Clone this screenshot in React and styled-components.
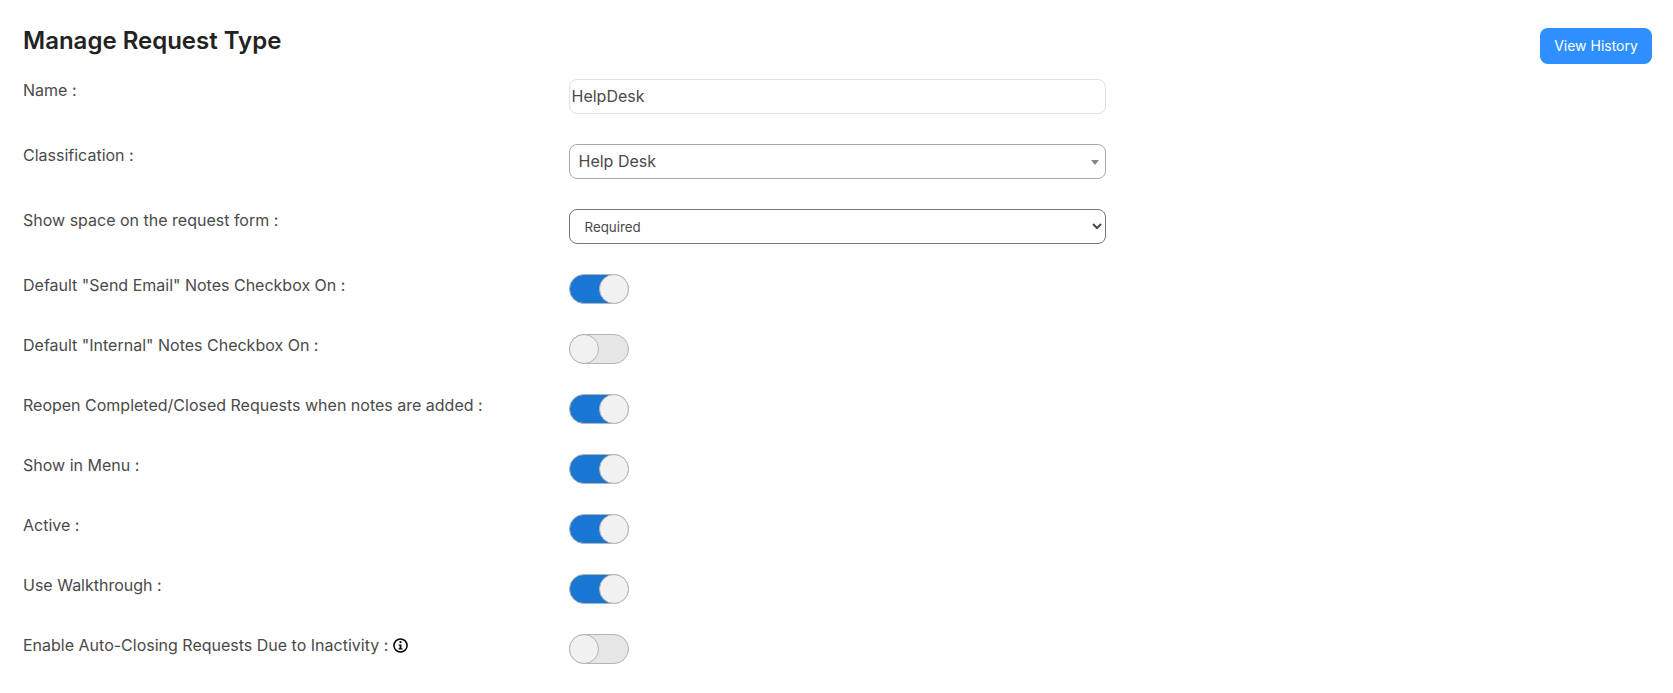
import React from 'react';
import styled, { createGlobalStyle } from 'styled-components';

const GlobalStyle = createGlobalStyle`
    html, body {
        margin: 0;
        background: #fff;
    }
    body {
        font-family: Inter, "Noto Sans", sans-serif;
        color: #495057;
    }
`;

const Page = styled.div`
    padding: 25px 21px 0 23px;
`;

const Header = styled.div`
    display: flex;
    justify-content: space-between;
    align-items: flex-start;
    height: 54px;
`;

const Title = styled.h2`
    margin: 0;
    font-size: 24px;
    line-height: 32px;
    font-weight: 600;
    color: #222;
`;

const HistoryButton = styled.button`
    width: 112px;
    height: 36px;
    margin-top: 3px;
    padding: 0 0 2px;
    border: none;
    border-radius: 8px;
    background: #2e8fff;
    color: #fff;
    font: 400 14px Inter, sans-serif;
`;

const Form = styled.div`
    display: flex;
    flex-direction: column;
`;

const Row = styled.div`
    display: grid;
    grid-template-columns: 546px 537px;
    height: ${(p) => (p.$tall ? '65px' : '60px')};
`;

const Label = styled.label`
    display: flex;
    align-items: center;
    gap: 5px;
    height: 22px;
    font-size: 16px;
    color: #4a4a4a;
`;

const TextInput = styled.input`
    box-sizing: border-box;
    width: 100%;
    height: 35px;
    padding: 0 1px 1px 1.5px;
    border: 1px solid #dee2e6;
    border-radius: 8px;
    outline: none;
    font: 400 16px Inter, sans-serif;
    color: #4a4a4a;
`;

const ComboBox = styled.div`
    box-sizing: border-box;
    display: flex;
    align-items: center;
    justify-content: space-between;
    height: 35px;
    padding: 0 6px 2px 8.5px;
    border: 1px solid #aaa;
    border-radius: 8px;
    font-size: 16px;
    color: #4a4a4a;
`;

const Caret = styled.span`
    width: 0;
    height: 0;
    border-left: 4px solid transparent;
    border-right: 4px solid transparent;
    border-top: 5px solid #888;
    margin-top: 3px;
`;

const NativeSelect = styled.select`
    box-sizing: border-box;
    width: 100%;
    height: 35px;
    padding: 0 10.5px;
    border: 1px solid #767676;
    border-radius: 8px;
    background-color: #fff;
    font: 400 13.33px Inter, sans-serif;
    color: #4a4a4a;
`;

const Track = styled.div`
    box-sizing: border-box;
    display: flex;
    justify-content: ${(p) => (p.$on ? 'flex-end' : 'flex-start')};
    width: 60px;
    height: 30px;
    border: 1px solid #b4b4b4;
    border-radius: 15px;
    background: ${(p) => (p.$on ? '#1976d2' : '#e6e6e6')};
`;

const Knob = styled.span`
    box-sizing: border-box;
    width: 30px;
    height: 30px;
    margin: -1px;
    border: 1px solid #b4b4b4;
    border-radius: 50%;
    background: #f1f1f1;
`;

const InfoIcon = () => (
    <svg width="15" height="15" viewBox="0 0 16 16" aria-hidden="true">
        <circle cx="8" cy="8" r="7" fill="#fff" stroke="#000" strokeWidth="1.6" />
        <rect x="7" y="3.4" width="2" height="2" fill="#000" />
        <path d="M5.9 6.8H9v4.2h1.1v1.2H5.9V11H7V8H5.9z" fill="#000" />
    </svg>
);

const Toggle = ({ on }) => (
    <Track $on={on}>
        <Knob />
    </Track>
);

const toggles = [
    { label: 'Default "Send Email" Notes Checkbox On :', on: true },
    { label: 'Default "Internal" Notes Checkbox On :', on: false },
    { label: 'Reopen Completed/Closed Requests when notes are added :', on: true },
    { label: 'Show in Menu :', on: true },
    { label: 'Active :', on: true },
    { label: 'Use Walkthrough :', on: true },
    { label: 'Enable Auto-Closing Requests Due to Inactivity :', on: false, info: true },
];

const App = () => {
    return (
        <Page>
            <GlobalStyle />
            <Header>
                <Title>Manage Request Type</Title>
                <HistoryButton>View History</HistoryButton>
            </Header>
            <Form>
                <Row $tall>
                    <Label>Name :</Label>
                    <TextInput defaultValue="HelpDesk" />
                </Row>
                <Row $tall>
                    <Label>Classification :</Label>
                    <ComboBox>
                        Help Desk
                        <Caret />
                    </ComboBox>
                </Row>
                <Row $tall>
                    <Label>Show space on the request form :</Label>
                    <NativeSelect defaultValue="Required">
                        <option>Required</option>
                        <option>Optional</option>
                        <option>Hidden</option>
                    </NativeSelect>
                </Row>
                {toggles.map((t) => (
                    <Row key={t.label}>
                        <Label>
                            {t.label}
                            {t.info && <InfoIcon />}
                        </Label>
                        <Toggle on={t.on} />
                    </Row>
                ))}
            </Form>
        </Page>
    );
};

export default App;
